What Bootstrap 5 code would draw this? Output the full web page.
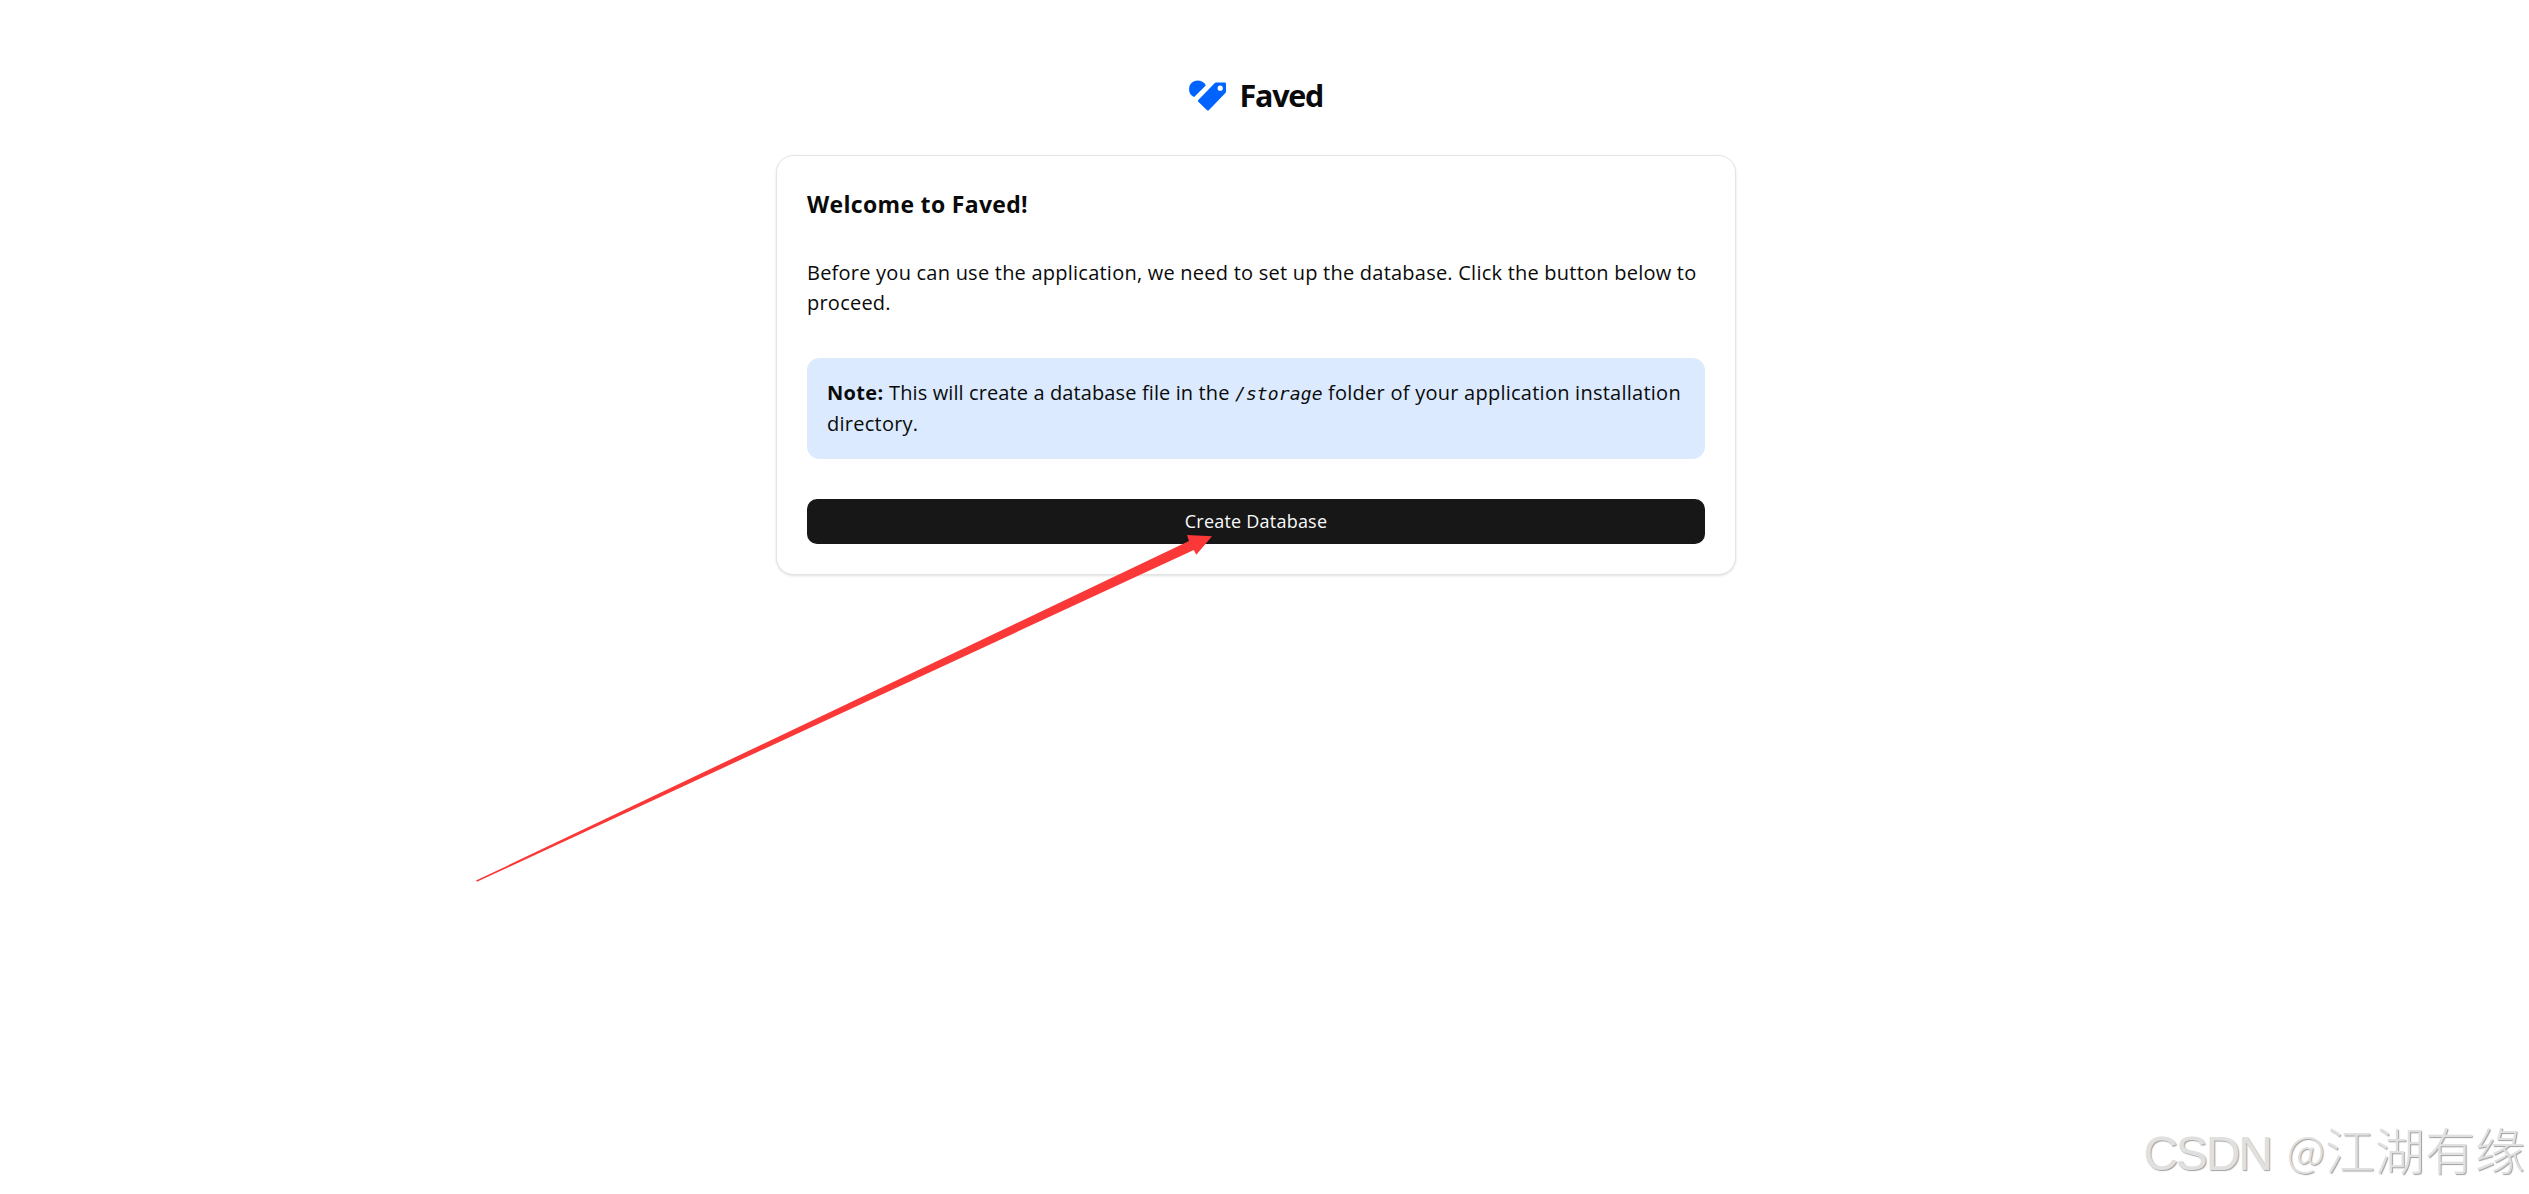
<!DOCTYPE html>
<html lang="en">
<head>
  <meta charset="UTF-8" />
  <meta name="viewport" content="width=device-width, initial-scale=1" />
  <title>Faved</title>
  <link href="https://cdn.jsdelivr.net/npm/bootstrap@5.3.3/dist/css/bootstrap.min.css" rel="stylesheet" />
  <style>
    body {
      min-height: 1194px;
      padding: 75px 17px 0 0;
      font-family: "Open Sans", "Noto Sans", sans-serif;
      font-size: 20px;
      line-height: 30px;
      letter-spacing: .25px;
      color: #0a0a0a;
    }
    .brand { height: 40px; gap: 13.5px; margin-bottom: 40px; }
    .brand svg { margin-top: 1px; }
    .brand-name { font-size: 30.5px; font-weight: 700; letter-spacing: -1.3px; }
    .setup-card {
      width: 960px;
      padding: 30px;
      border: 1px solid #e5e5e5;
      border-radius: 17.5px;
      box-shadow: 0 1px 3px rgba(0, 0, 0, .1), 0 1px 2px -1px rgba(0, 0, 0, .1);
    }
    .setup-title { font-size: 23px; line-height: 36px; letter-spacing: .32px; margin-bottom: 36px; }
    .setup-text { margin-bottom: 40px; letter-spacing: .23px; }
    .setup-note {
      padding: 20px;
      margin-bottom: 40px;
      line-height: 30.5px;
      background: #dbeafe;
      border-radius: 12.5px;
    }
    .setup-note strong { letter-spacing: .35px; }
    .setup-note .note-lead { letter-spacing: .11px; }
    .setup-note code {
      font: italic 18px/1 "DejaVu Sans Mono", monospace;
      letter-spacing: .12px;
      color: inherit;
    }
    .btn-create {
      height: 45px;
      padding: 0;
      font-size: 18px;
      letter-spacing: .22px;
      color: #fafafa;
      background: #171717;
      border: 0;
      border-radius: 10px;
    }
    .pointer { left: 0; top: 0; pointer-events: none; }
    .watermark {
      right: 4px;
      bottom: 3px;
      font-family: "Noto Sans CJK SC", sans-serif;
      font-weight: 300;
      font-size: 50px;
      line-height: 74px;
      letter-spacing: 0;
      color: #e0e0e0;
      text-shadow: 1px 1px 1px #a0a0a0;
    }
    .watermark .latin { font-family: "Liberation Sans", sans-serif; font-size: 48px; letter-spacing: -2.2px; margin-right: 5px; }
    .watermark .at { font-size: 42px; vertical-align: 3px; line-height: 1; }
  </style>
</head>
<body class="bg-white position-relative overflow-hidden">
  <div class="brand d-flex align-items-center justify-content-center">
    <svg width="37" height="32" viewBox="9 8 37 32" fill="#0062ff">
      <path d="M14.2 24.8 C11 23.6 9.2 20.8 9.2 17.2 C9.2 12.2 13 8.8 17.6 8.8 C21.2 8.8 24.2 10.4 25.6 13.4 Z" stroke="#0062ff" stroke-width=".4" stroke-linejoin="round" />
      <path fill-rule="evenodd" d="M36 10.5 H44.8 Q46 10.5 46 11.7 V19.6 Q46 20.4 45.4 21 L28.8 38.2 Q27.9 39 27 38.2 L18.3 29.8 Q17.5 28.9 18.3 28 L34.8 11 Q35.3 10.5 36 10.5 Z M40.2 13.6 A2.6 2.6 0 1 0 40.2 18.8 A2.6 2.6 0 1 0 40.2 13.6 Z" />
    </svg>
    <span class="brand-name">Faved</span>
  </div>

  <main class="setup-card card mx-auto">
    <h1 class="setup-title fw-bold">Welcome to Faved!</h1>
    <p class="setup-text">Before you can use the application, we need to set up the database. Click the button below to proceed.</p>
    <div class="setup-note">
      <strong>Note:</strong> <span class="note-lead">This will create a database file in the</span> <code>/storage</code> folder of your application installation directory.
    </div>
    <button type="button" class="btn btn-create w-100">Create Database</button>
  </main>

  <!-- arrow pointing at the button -->
  <svg class="pointer position-absolute" width="1300" height="900" viewBox="0 0 1300 900" fill="#fb3838">
    <path d="M476 880.6 L1189 541 L1187 535 L1212 536.2 L1196.3 554.7 L1193.8 550 L477 881.8 Z" />
  </svg>

  <div class="watermark position-absolute text-nowrap"><span class="latin">CSDN </span><span class="at">@</span>江湖有缘</div>

  <script src="https://cdn.jsdelivr.net/npm/bootstrap@5.3.3/dist/js/bootstrap.bundle.min.js"></script>
</body>
</html>
